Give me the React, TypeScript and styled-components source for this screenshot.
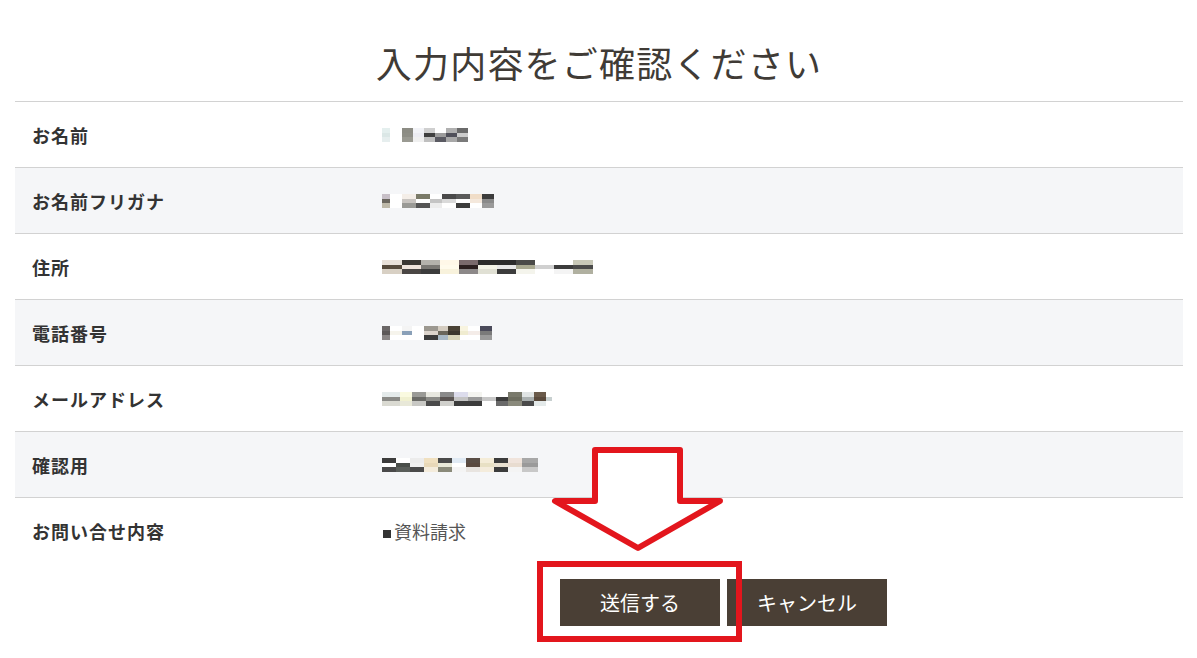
import React from "react";
import styled, { createGlobalStyle } from "styled-components";

type Block = [number, string, string, string];

interface Row {
  label: string;
  value?: string;
  mosaic?: Block[];
}

const GlobalStyle = createGlobalStyle`
  body {
    margin: 0;
    background: #ffffff;
    font-family: "Noto Sans CJK JP", "Noto Sans", sans-serif;
    color: #333333;
  }
`;

const Page = styled.div`
  position: relative;
  width: 1197px;
  height: 658px;
  overflow: hidden;
  padding: 0 14px 0 15px;
  box-sizing: border-box;
`;

const Title = styled.h1`
  margin: 0;
  padding-top: 36px;
  height: 52px;
  line-height: 52px;
  margin-bottom: 13px;
  text-align: center;
  font-size: 36px;
  font-weight: 400;
  letter-spacing: 1.2px;
  color: #403b36;
`;

const Table = styled.div`
  display: flex;
  flex-direction: column;
`;

const TableRow = styled.div<{ $alt: boolean }>`
  display: grid;
  grid-template-columns: 367px 1fr;
  align-items: center;
  height: 65px;
  border-top: 1px solid #d2d2d2;
  background: ${(p) => (p.$alt ? "#f5f6f8" : "#ffffff")};
`;

const Label = styled.div`
  padding-left: 17px;
  font-size: 18px;
  font-weight: 700;
  letter-spacing: 1px;
  color: #333333;
`;

const Value = styled.div`
  display: flex;
  align-items: center;
  font-size: 18px;
  color: #555555;
`;

const Square = styled.span`
  display: inline-block;
  width: 8px;
  height: 8px;
  margin: 6px 3px 0 1px;
  background: #333333;
`;

const Buttons = styled.div`
  display: flex;
  gap: 7px;
  margin-top: 16px;
  padding-left: 545px;
`;

const Button = styled.button`
  width: 160px;
  height: 47px;
  border: none;
  background: #4a3f35;
  color: #ffffff;
  font-family: "Noto Sans CJK JP", "Noto Sans", sans-serif;
  font-size: 20px;
  cursor: pointer;
`;

const Highlight = styled.div`
  position: absolute;
  left: 537px;
  top: 561px;
  width: 205px;
  height: 81px;
  box-sizing: border-box;
  border: 6px solid #e3161d;
  pointer-events: none;
`;

const Arrow = styled.svg`
  position: absolute;
  left: 0;
  top: 0;
  pointer-events: none;
`;

const rows: Row[] = [
  {
    label: "お名前",
    mosaic: [
      [8, "#e4efee", "#dbe7e6", "#e6eeee"],
      [12, "#ffffff", "#ffffff", "#ffffff"],
      [11, "#8c8c84", "#8e8e86", "#9a9a92"],
      [11, "#f2f3f7", "#ececf2", "#f0f0f0"],
      [11, "#cfcfcf", "#3f3f3f", "#bfbfbf"],
      [11, "#ffffff", "#9c9c9c", "#5a5a62"],
      [11, "#b0b0b0", "#50505a", "#a8a8a8"],
      [11, "#6a6a6a", "#cccccc", "#7a7a7a"],
    ],
  },
  {
    label: "お名前フリガナ",
    mosaic: [
      [8, "#c8c0c8", "#6a665e", "#bdb8a8"],
      [12, "#ffffff", "#ffffff", "#ffffff"],
      [14, "#f4eee8", "#c8c4c0", "#9a9a96"],
      [14, "#7a7a68", "#ffffff", "#555555"],
      [12, "#ffffff", "#c4c4c4", "#ececec"],
      [14, "#4a4a4a", "#dadada", "#ffffff"],
      [14, "#5a5a5a", "#ffffff", "#3c3c3c"],
      [12, "#f0ddc8", "#f4e8dc", "#ffffff"],
      [12, "#3c3c3c", "#8a8a8a", "#9a9a9a"],
    ],
  },
  {
    label: "住所",
    mosaic: [
      [20, "#e8e0d8", "#564a3c", "#d8d0c4"],
      [19, "#3c3834", "#f0e4dc", "#4a4644"],
      [19, "#b4b2ac", "#7a7874", "#3c3c3c"],
      [19, "#fff8e8", "#fffbec", "#f8f2dc"],
      [19, "#7a6a6c", "#2c2020", "#8c8888"],
      [19, "#2c2c2c", "#f4f4e8", "#e0e0d4"],
      [19, "#2c2c2c", "#e8e8e8", "#3c3c3c"],
      [19, "#4a4a48", "#a8a890", "#f4f4ec"],
      [19, "#ffffff", "#d0d0d0", "#ffffff"],
      [19, "#ffffff", "#3c3c3c", "#f4f4f4"],
      [20, "#c8c8b8", "#4a4a4a", "#b0b0a0"],
    ],
  },
  {
    label: "電話番号",
    mosaic: [
      [8, "#6a6666", "#5c5858", "#8a8686"],
      [12, "#ffffff", "#f6f4ec", "#ffffff"],
      [10, "#f4f4f4", "#8aa0b8", "#ffffff"],
      [12, "#ffffff", "#ffffff", "#ffffff"],
      [14, "#9c9890", "#dcd4cc", "#3c3c3c"],
      [10, "#d4ccc0", "#6a665a", "#a8b8c4"],
      [12, "#4a4236", "#3c362c", "#d8d4b8"],
      [8, "#f8f4e0", "#f0ecd0", "#ffffff"],
      [12, "#ffffff", "#f4ece8", "#ffffff"],
      [12, "#4a4a5a", "#7a7a7a", "#9a9a9a"],
    ],
  },
  {
    label: "メールアドレス",
    mosaic: [
      [18, "#e4eaea", "#8a8a86", "#dadad2"],
      [12, "#fafae0", "#f0f0d0", "#e8e8d8"],
      [14, "#9a9a96", "#6a6a66", "#c8c8c4"],
      [14, "#e8e8e0", "#8c8c88", "#4a4a4a"],
      [14, "#8a8a8a", "#5a5452", "#d0d0cc"],
      [14, "#dcdcec", "#c4c4c4", "#3c3c3c"],
      [14, "#f4f4f0", "#9a9a9a", "#3c3c3c"],
      [14, "#ffffff", "#c8c8c8", "#ffffff"],
      [12, "#ffffff", "#3c3c3c", "#6a6a6a"],
      [14, "#7a7a6c", "#6e6e60", "#8a8a7c"],
      [12, "#e0e4e4", "#aab0b0", "#4a4a4a"],
      [12, "#6a5a4a", "#5a4a3c", "#e4eaea"],
      [6, "#ffffff", "#c8d0d0", "#ffffff"],
    ],
  },
  {
    label: "確認用",
    mosaic: [
      [14, "#3c3c3c", "#ffffff", "#4a4a4a"],
      [14, "#ffffff", "#4a4e4a", "#5a5e5a"],
      [14, "#ececec", "#f0f0f0", "#4a4a4a"],
      [14, "#f0e0c0", "#e8d8b8", "#f4ecdc"],
      [14, "#4a4a4a", "#e8e8d8", "#8a8a7a"],
      [14, "#e0eaf4", "#ffffff", "#f4f4f4"],
      [14, "#5a4e46", "#5a4a40", "#e8e4e0"],
      [14, "#f4ecd8", "#e8e0c4", "#f4ecdc"],
      [14, "#3c3c3c", "#e8e0d0", "#3c3c3c"],
      [14, "#f0e4dc", "#e8dcd0", "#f4f4f4"],
      [16, "#a8a8a8", "#9a9a9a", "#c8c8c8"],
    ],
  },
  { label: "お問い合せ内容", value: "資料請求" },
];

function Mosaic({ blocks }: { blocks: Block[] }) {
  const width = blocks.reduce((sum, b) => sum + b[0], 0);
  let x = 0;
  return (
    <svg width={width} height={14} viewBox={`0 0 ${width} 14`}>
      {blocks.map(([w, top, mid, bottom], i) => {
        const left = x;
        x += w;
        return (
          <g key={i}>
            <rect x={left} y={0} width={w} height={5} fill={top} />
            <rect x={left} y={5} width={w} height={4} fill={mid} />
            <rect x={left} y={9} width={w} height={5} fill={bottom} />
          </g>
        );
      })}
    </svg>
  );
}

export default function App() {
  return (
    <>
      <GlobalStyle />
      <Page>
        <Title>入力内容をご確認ください</Title>
        <Table>
          {rows.map((row, i) => (
            <TableRow key={row.label} $alt={i % 2 === 1}>
              <Label>{row.label}</Label>
              <Value>
                {row.mosaic ? (
                  <Mosaic blocks={row.mosaic} />
                ) : (
                  <>
                    <Square />
                    {row.value}
                  </>
                )}
              </Value>
            </TableRow>
          ))}
        </Table>
        <Buttons>
          <Button type="submit">送信する</Button>
          <Button type="button">キャンセル</Button>
        </Buttons>
        <Arrow width={1197} height={658} viewBox="0 0 1197 658">
          <polygon
            points="595,450 680,450 680,501 720,501 638,548 555,501 595,501"
            fill="#ffffff"
            stroke="#e3161d"
            strokeWidth={6}
            strokeLinejoin="round"
          />
        </Arrow>
        <Highlight />
      </Page>
    </>
  );
}
